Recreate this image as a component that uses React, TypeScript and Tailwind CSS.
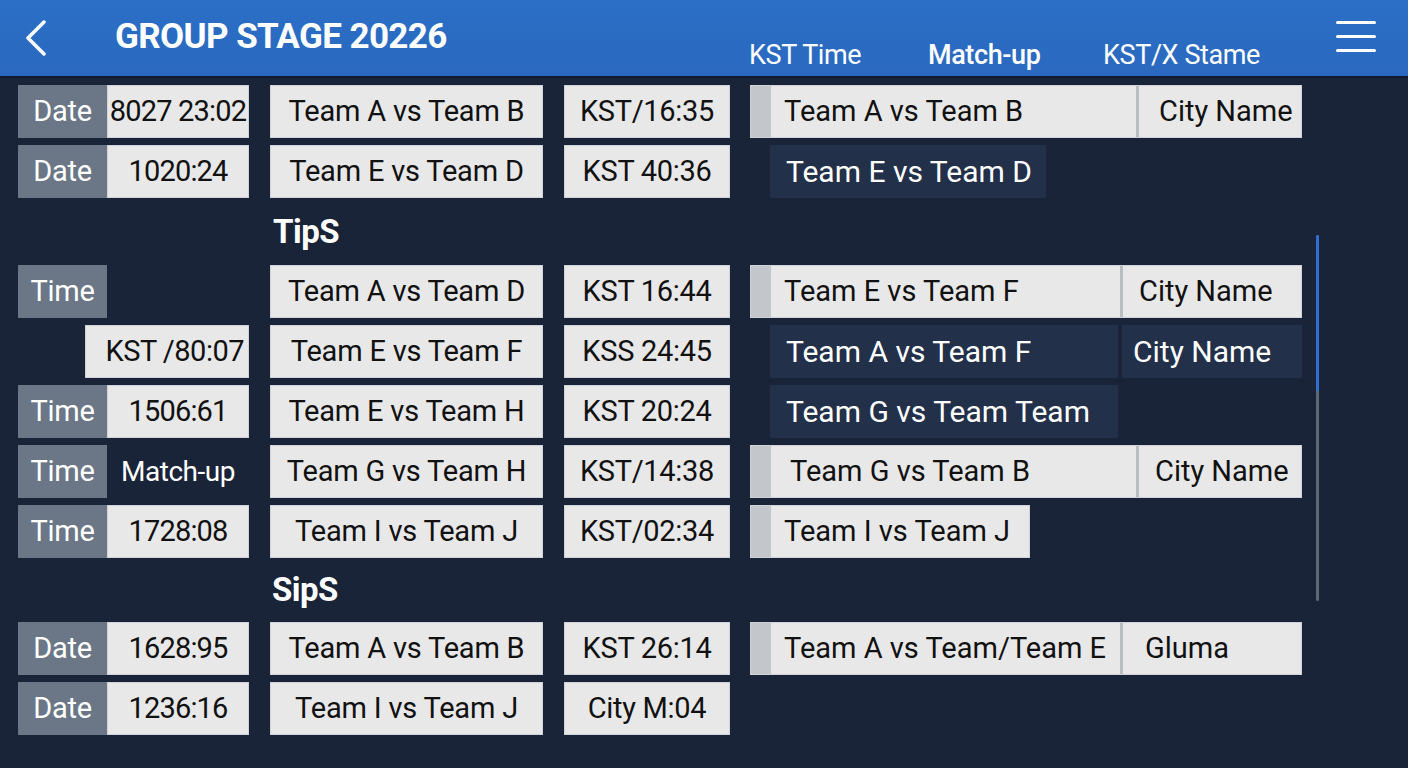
import React from "react";

type Col4 =
  | { kind: "light"; text: string; width: number; city?: string; divider?: number; cityPad?: number; textPad?: number }
  | { kind: "dark"; text: string; width: number; city?: string }
  | { kind: "none" };

type Row = {
  label?: string;
  value?: string;
  valueOffset?: boolean;
  valueBare?: boolean;
  match: string;
  time: string;
  col4: Col4;
};

const font = { fontFamily: "Roboto, 'Noto Sans', 'Liberation Sans', sans-serif" };

function Col1({ r }: { r: Row }) {
  if (r.valueOffset) {
    return (
      <div className="w-[231px] h-full flex justify-end">
        <div className="w-[164px] h-full bg-[#e8e8e8] border border-[#cfd2d6] flex items-center justify-end pr-[4px] text-[#111] text-[29px] tracking-[-0.5px] whitespace-nowrap">
          {r.value}
        </div>
      </div>
    );
  }
  return (
    <div className="w-[231px] h-full flex">
      <div className="w-[89px] h-full bg-[#6b7787] flex items-center justify-center text-white text-[29px] tracking-[-0.3px]">
        {r.label}
      </div>
      {r.value !== undefined &&
        (r.valueBare ? (
          <div className="w-[142px] h-full flex items-center justify-center text-white text-[28px] tracking-[-0.5px]">{r.value}</div>
        ) : (
          <div className="w-[142px] h-full bg-[#e8e8e8] border border-[#cfd2d6] flex items-center justify-center text-[#111] text-[29px] tracking-[-0.8px] whitespace-nowrap">
            {r.value}
          </div>
        ))}
    </div>
  );
}

function Col4View({ c }: { c: Col4 }) {
  if (c.kind === "none") return null;
  if (c.kind === "dark") {
    return (
      <div className="flex h-full gap-[4px] ml-[20px]">
        <div
          className="h-full bg-[#22304a] flex items-center pl-[16px] text-white text-[30px] whitespace-nowrap"
          style={{ width: c.width }}
        >
          {c.text}
        </div>
        {c.city && (
          <div className="w-[180px] h-full bg-[#22304a] flex items-center pl-[11px] text-white text-[30px]">{c.city}</div>
        )}
      </div>
    );
  }
  return (
    <div
      className="h-full bg-[#e8e8e8] border border-[#cfd2d6] flex items-stretch text-[#111] text-[29px]"
      style={{ width: c.width }}
    >
      <div className="w-[20px] bg-[#c3c6cb]" />
      <div
        className="flex items-center whitespace-nowrap"
        style={{ width: c.divider ? c.divider : undefined, paddingLeft: c.textPad ?? 13 }}
      >
        {c.text}
      </div>
      {c.city && (
        <>
          <div className="w-[3px] bg-[#b9bcc1]" />
          <div className="flex-1 flex items-center" style={{ paddingLeft: c.cityPad ?? 20 }}>
            {c.city}
          </div>
        </>
      )}
    </div>
  );
}

function MatchRow({ r }: { r: Row }) {
  return (
    <div className="flex h-[53px] items-stretch">
      <Col1 r={r} />
      <div className="w-[273px] ml-[21px] h-full bg-[#e8e8e8] border border-[#cfd2d6] flex items-center justify-center text-[#111] text-[29px] tracking-[-0.2px] whitespace-nowrap">
        {r.match}
      </div>
      <div className="w-[166px] ml-[21px] h-full bg-[#e8e8e8] border border-[#cfd2d6] flex items-center justify-center text-[#111] text-[29px] tracking-[-0.3px] whitespace-nowrap">
        {r.time}
      </div>
      <div className="ml-[20px] h-full flex">
        <Col4View c={r.col4} />
      </div>
    </div>
  );
}

const group1: Row[] = [
  { label: "Date", value: "8027 23:02", match: "Team A vs Team B", time: "KST/16:35", col4: { kind: "light", text: "Team A vs Team B", width: 552, city: "City Name", divider: 365, cityPad: 20 } },
  { label: "Date", value: "1020:24", match: "Team E vs Team D", time: "KST 40:36", col4: { kind: "dark", text: "Team E vs Team D", width: 276 } },
];

const group2: Row[] = [
  { label: "Time", match: "Team A vs Team D", time: "KST 16:44", col4: { kind: "light", text: "Team E vs Team F", width: 552, city: "City Name", divider: 349, cityPad: 16 } },
  { value: "KST /80:07", valueOffset: true, match: "Team E vs Team F", time: "KSS 24:45", col4: { kind: "dark", text: "Team A vs Team F", width: 348, city: "City Name" } },
  { label: "Time", value: "1506:61", match: "Team E vs Team H", time: "KST 20:24", col4: { kind: "dark", text: "Team G vs Team Team", width: 348 } },
  { label: "Time", value: "Match-up", valueBare: true, match: "Team G vs Team H", time: "KST/14:38", col4: { kind: "light", text: "Team G vs Team B", width: 552, city: "City Name", divider: 365, cityPad: 16, textPad: 19 } },
  { label: "Time", value: "1728:08", match: "Team I vs Team J", time: "KST/02:34", col4: { kind: "light", text: "Team I vs Team J", width: 280 } },
];

const group3: Row[] = [
  { label: "Date", value: "1628:95", match: "Team A vs Team B", time: "KST 26:14", col4: { kind: "light", text: "Team A vs Team/Team E", width: 552, city: "Gluma", divider: 349, cityPad: 22 } },
  { label: "Date", value: "1236:16", match: "Team I vs Team J", time: "City M:04", col4: { kind: "none" } },
];

export default function App() {
  return (
    <div className="w-[1408px] h-[768px] overflow-hidden bg-[#1a2439] relative" style={font}>
      <header className="h-[78px] bg-gradient-to-b from-[#2b6fc6] to-[#2a69bf] border-b-2 border-[#0f1b30] relative">
        <div className="absolute left-[22px] top-[20px]">
          <svg width="28" height="36" viewBox="0 0 28 36" fill="none">
            <path d="M22 2 L6 18 L22 34" stroke="white" strokeWidth="3.5" strokeLinecap="round" strokeLinejoin="round" />
          </svg>
        </div>
        <div className="absolute left-[115px] top-[15px] text-white font-bold text-[35px] leading-[44px] tracking-[-0.6px]">
          GROUP STAGE 20226
        </div>
        <nav className="absolute left-[749px] top-[37px] flex text-white text-[27px] leading-[36px] tracking-[-0.4px]">
          <span className="w-[179px]">KST Time</span>
          <span className="w-[175px] font-medium">Match-up</span>
          <span>KST/X Stame</span>
        </nav>
        <div className="absolute left-[1336px] top-[21px] flex flex-col gap-[11px]">
          <div className="w-[40px] h-[3px] bg-white rounded-full" />
          <div className="w-[40px] h-[3px] bg-white rounded-full" />
          <div className="w-[40px] h-[3px] bg-white rounded-full" />
        </div>
      </header>

      <main className="pl-[18px] pt-[7px]">
        <div className="flex flex-col gap-[7px]">
          {group1.map((r, i) => (
            <MatchRow key={i} r={r} />
          ))}
        </div>
        <div className="h-[67px] flex items-center pl-[255px] text-white font-bold text-[33px] tracking-[-0.5px]">TipS</div>
        <div className="flex flex-col gap-[7px]">
          {group2.map((r, i) => (
            <MatchRow key={i} r={r} />
          ))}
        </div>
        <div className="h-[64px] flex items-center pl-[254px] text-white font-bold text-[33px] tracking-[-0.5px]">SipS</div>
        <div className="flex flex-col gap-[7px]">
          {group3.map((r, i) => (
            <MatchRow key={i} r={r} />
          ))}
        </div>
      </main>

      <div className="absolute left-[1316px] top-[235px] w-[3px] h-[366px] bg-[#5d6675] rounded-full overflow-hidden">
        <div className="w-full h-[156px] bg-[#2f6fcf]" />
      </div>
    </div>
  );
}
